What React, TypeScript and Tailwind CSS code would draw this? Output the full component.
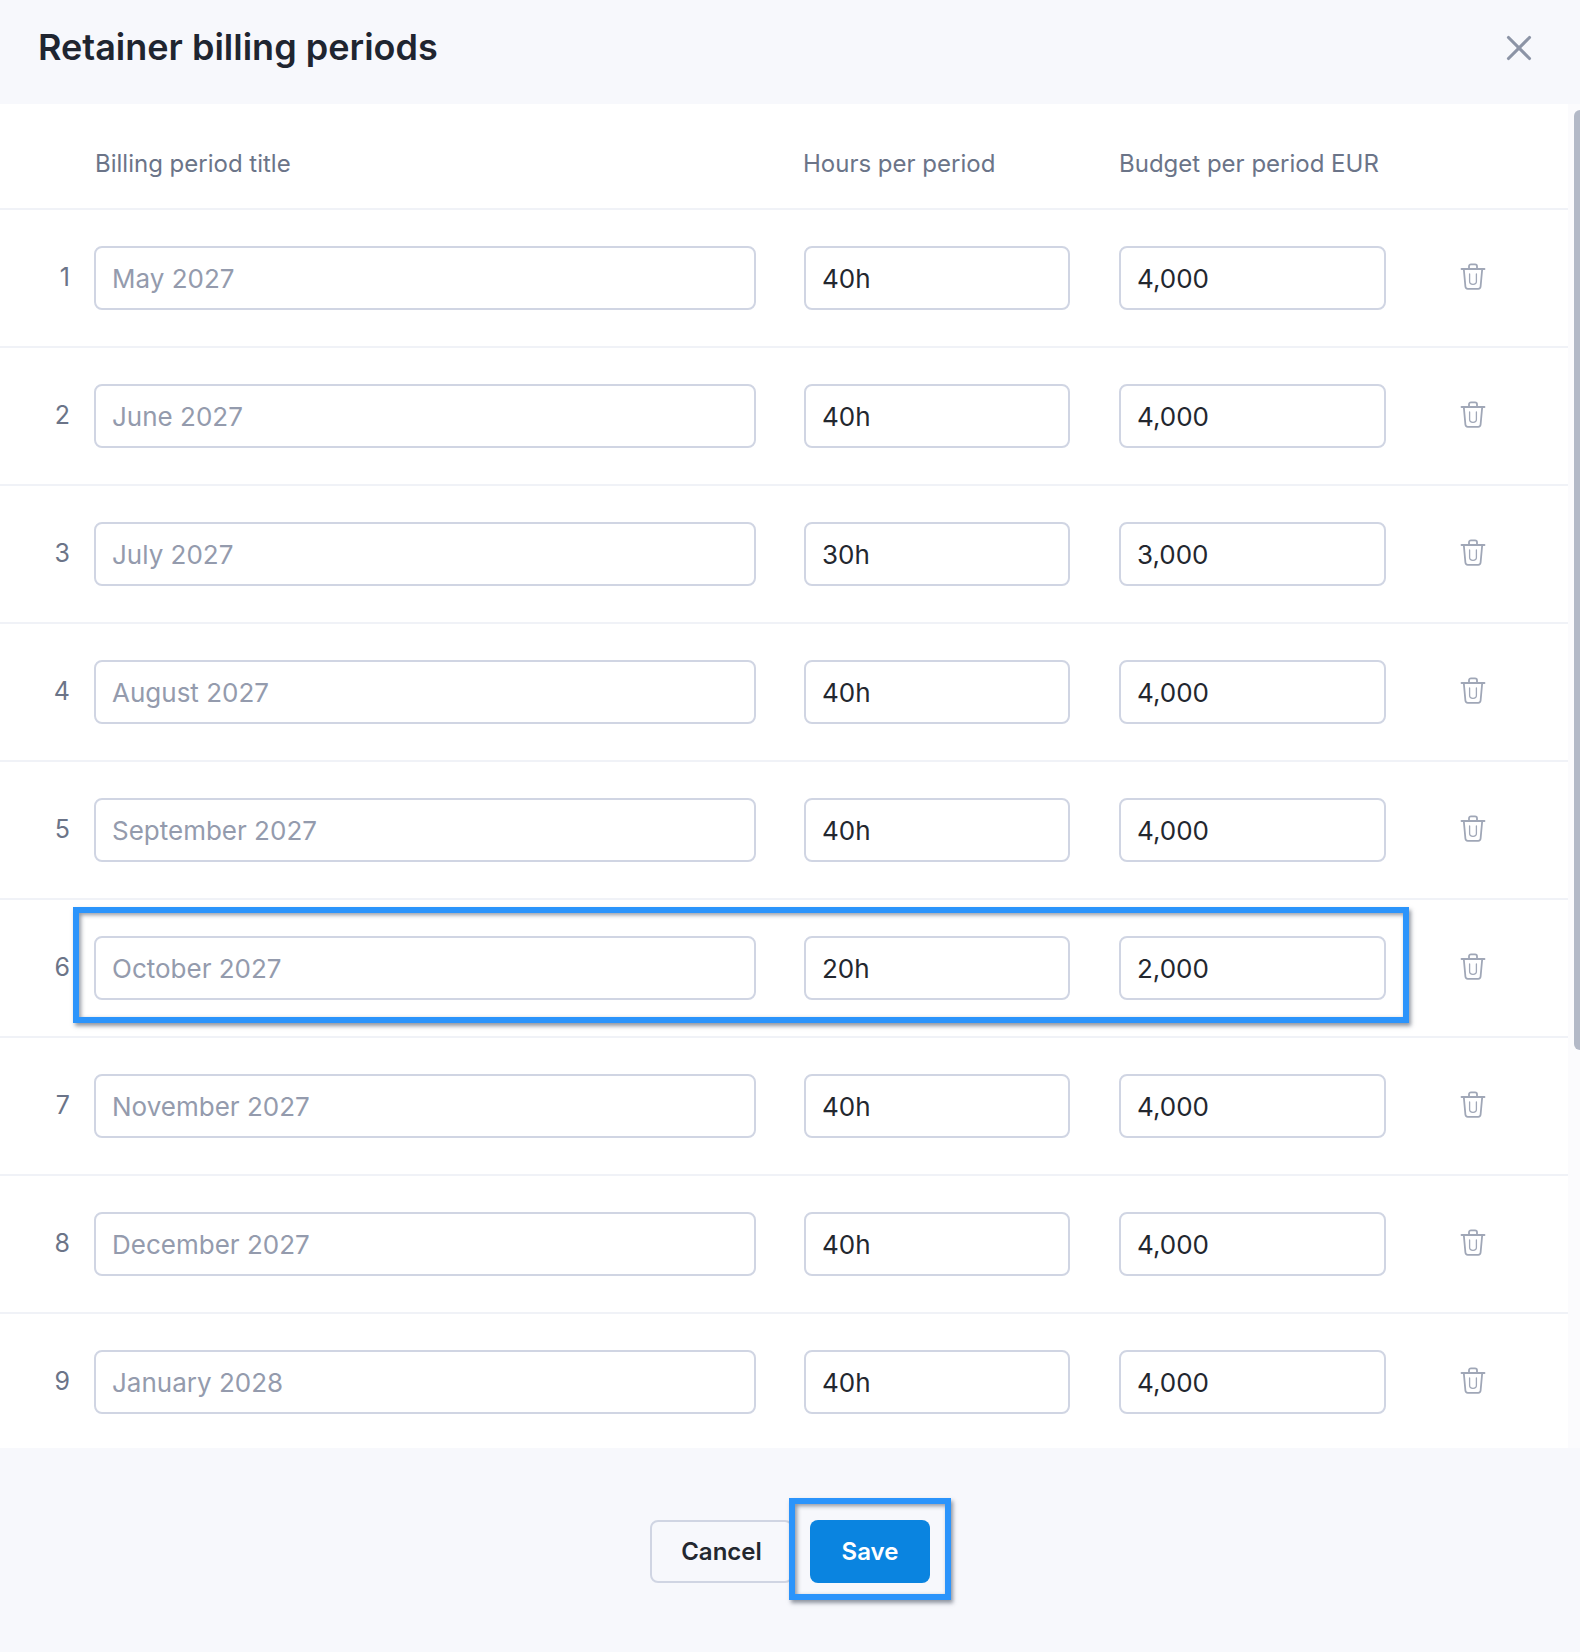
import React from 'react';
import { X } from 'lucide-react';

type Period = { id: number; title: string; hours: string; budget: string };

const periods: Period[] = [
    { id: 1, title: 'May 2027', hours: '40h', budget: '4,000' },
    { id: 2, title: 'June 2027', hours: '40h', budget: '4,000' },
    { id: 3, title: 'July 2027', hours: '30h', budget: '3,000' },
    { id: 4, title: 'August 2027', hours: '40h', budget: '4,000' },
    { id: 5, title: 'September 2027', hours: '40h', budget: '4,000' },
    { id: 6, title: 'October 2027', hours: '20h', budget: '2,000' },
    { id: 7, title: 'November 2027', hours: '40h', budget: '4,000' },
    { id: 8, title: 'December 2027', hours: '40h', budget: '4,000' },
    { id: 9, title: 'January 2028', hours: '40h', budget: '4,000' },
];

const inputClass = 'block h-[64px] rounded-lg border-2 border-[#d0d5e3] bg-white text-[26px] text-[#23272f] placeholder-[#949bad] outline-none';

const highlightClass = 'pointer-events-none absolute border-[6px] border-[#2b94fb] shadow-[2px_3px_4px_rgba(40,50,70,0.5),inset_2px_2px_4px_rgba(40,50,70,0.5)]';

const TrashIcon: React.FC = () => (
    <svg width="26" height="28" viewBox="0 0 26 28" fill="none" stroke="#a0a7b7" strokeWidth="1.8" strokeLinecap="round" strokeLinejoin="round">
        <path d="M1.5 6h23" />
        <path d="M9 6V3.2C9 2 9.8 1.4 11 1.4h4c1.2 0 2 .6 2 1.8V6" />
        <path d="M3.8 6l1.6 17.5c.1 1.5 1 2.3 2.4 2.3h10.4c1.4 0 2.3-.8 2.4-2.3L22.2 6" />
        <path d="M9.6 11v7.5c0 1.8 1.2 2.8 3.4 2.8s3.4-1 3.4-2.8V11" strokeWidth="1.3" />
    </svg>
);

const PeriodRow: React.FC<{ period: Period; last: boolean }> = ({ period, last }) => (
    <div className={`relative flex items-start pt-[36px] ${last ? 'h-[134px]' : 'h-[138px] border-b-2 border-[#f0f2f7]'}`}>
        <div className="mt-[15px] w-[70px] text-right text-[25px] leading-[32px] text-[#6b7488]">{period.id}</div>
        <input placeholder={period.title} className={`${inputClass} ml-[24px] w-[662px] pl-[16px]`} />
        <input defaultValue={period.hours} className={`${inputClass} ml-[48px] w-[266px] pl-[16px]`} />
        <input defaultValue={period.budget} className={`${inputClass} ml-[49px] w-[267px] pl-[16px]`} />
        <div className="ml-[74px] mt-[17px] flex w-[26px] justify-center">
            <TrashIcon />
        </div>
        {period.id === 6 && <div className={`${highlightClass} left-[73px] top-[7px] h-[116px] w-[1336px]`} />}
    </div>
);

export default function App() {
    return (
        <div className="flex h-[1652px] w-[1580px] flex-col overflow-hidden bg-[#f7f8fc] font-['Inter',sans-serif]">
            <div className="flex h-[104px] items-center justify-between pl-[38px] pr-[40px]">
                <h2 className="-mt-[11px] text-[36px] font-semibold text-[#1f2530]">Retainer billing periods</h2>
                <X size={42} strokeWidth={1.8} className="-mt-[8px] text-[#8c94a6]" />
            </div>
            <div className="flex">
                <div className="w-[1568px] bg-white">
                    <div className="flex h-[106px] items-start border-b-2 border-[#f0f2f7] pt-[42px] text-[24px] leading-[36px] text-[#6b7488]">
                        <span className="ml-[95px] w-[708px]">Billing period title</span>
                        <span className="w-[316px]">Hours per period</span>
                        <span>Budget per period EUR</span>
                    </div>
                    {periods.map((period, index) => (
                        <PeriodRow key={period.id} period={period} last={index === periods.length - 1} />
                    ))}
                </div>
                <div className="flex w-[12px] justify-end bg-[#fbfbfd]">
                    <div className="mt-[6px] h-[940px] w-[6px] rounded-tl-md rounded-bl-md bg-[#b3b9c7]" />
                </div>
            </div>
            <div className="flex justify-center gap-[17px] pt-[72px] text-[24px] font-semibold">
                <button className="h-[63px] w-[143px] rounded-lg border-2 border-[#d0d5e3] text-[#23272f]">Cancel</button>
                <div className="relative">
                    <button className="h-[63px] w-[120px] rounded-lg bg-[#0a84e0] text-white">Save</button>
                    <div className={`${highlightClass} -left-[21px] -top-[22px] h-[102px] w-[162px]`} />
                </div>
            </div>
        </div>
    );
}
